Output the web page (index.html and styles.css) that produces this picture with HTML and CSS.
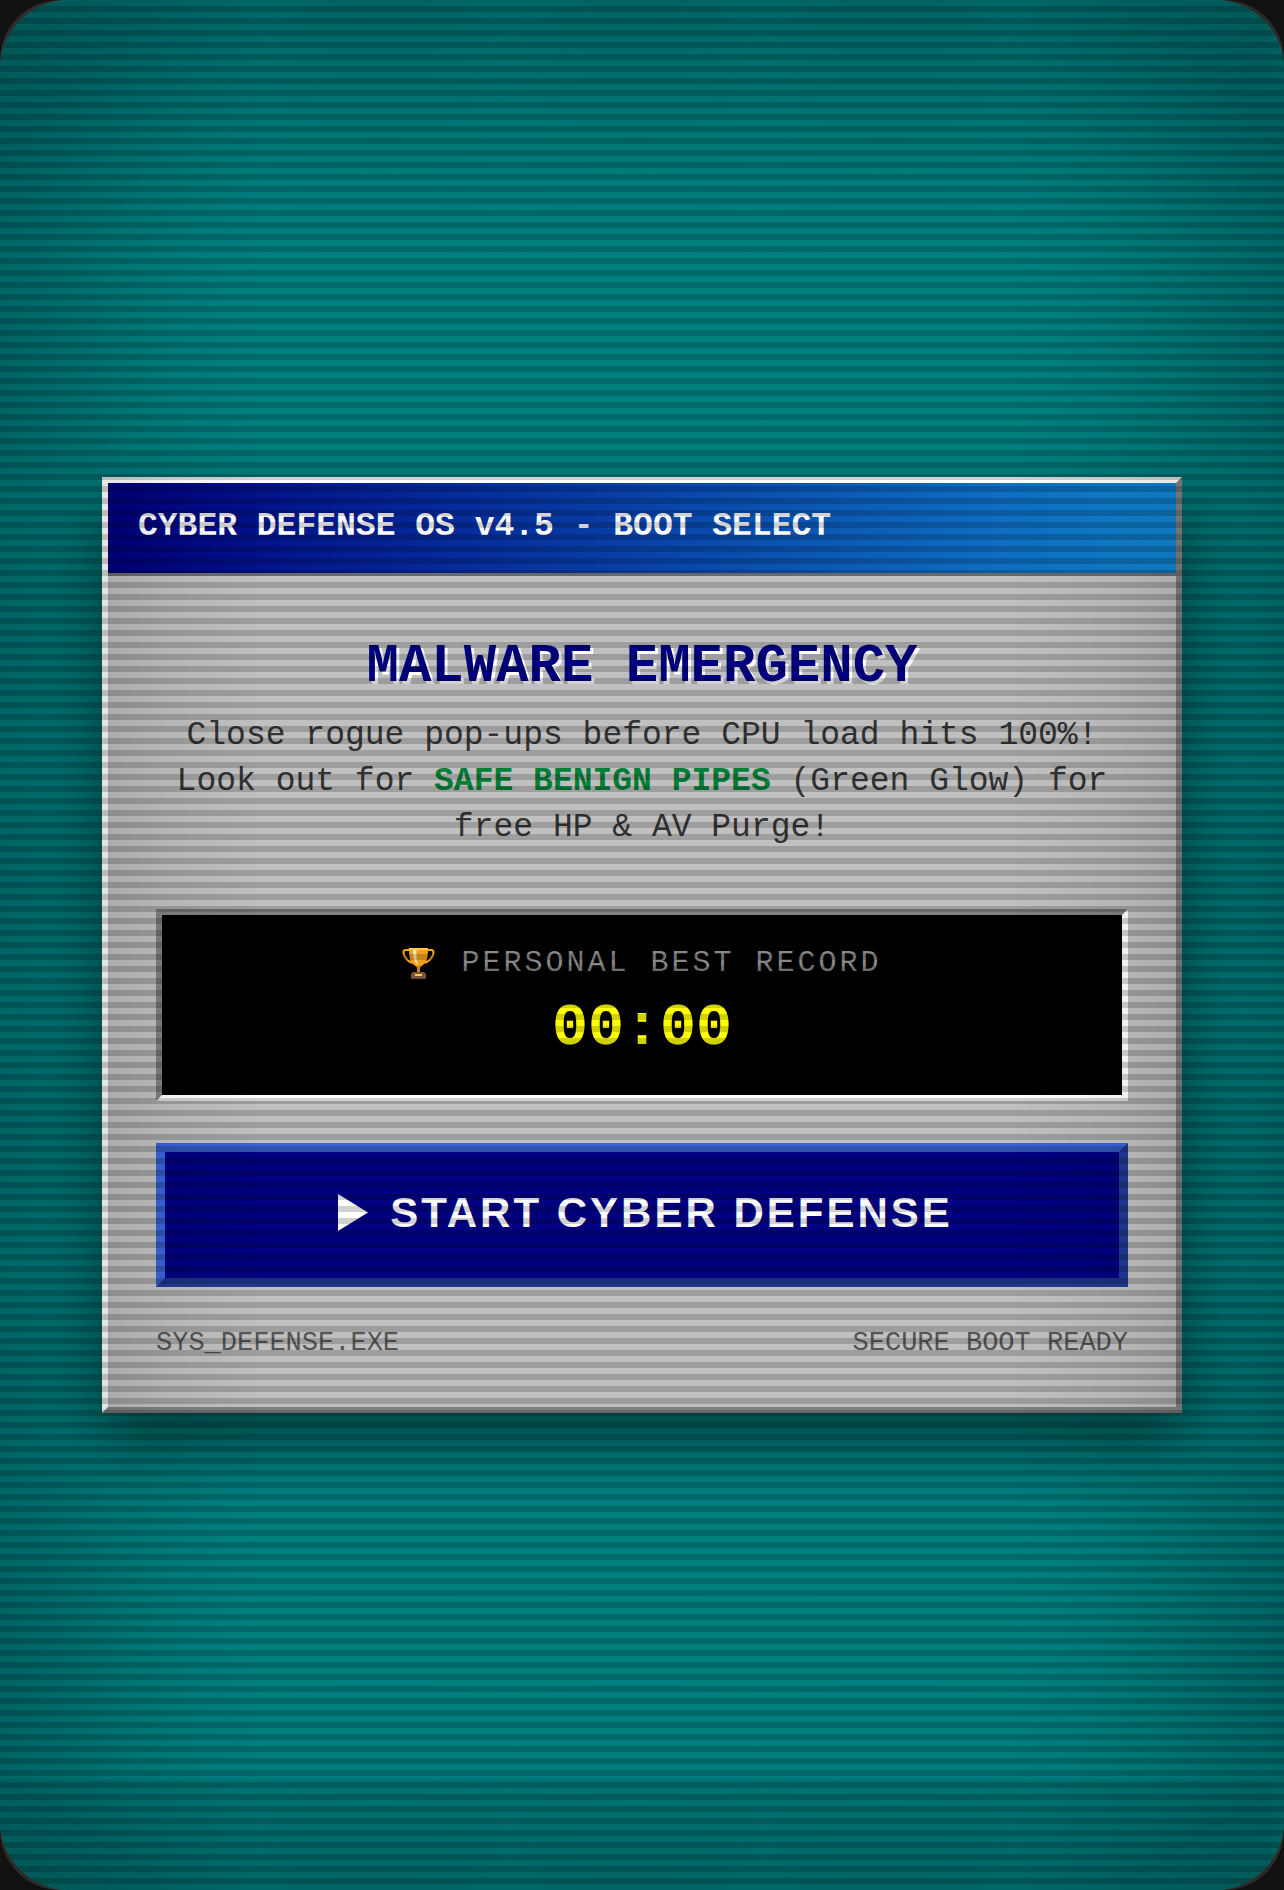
FILE: index.html
```html
<!DOCTYPE html>
<html lang="en">
<head>
    <meta charset="UTF-8">
    <title>Cyber Defense OS</title>
    <link rel="stylesheet" href="styles.css">
</head>
<body>
    <div class="screen">
        <div class="window">
            <header class="title-bar">CYBER DEFENSE OS v4.5 - BOOT SELECT</header>
            <section class="content">
                <h1>MALWARE EMERGENCY</h1>
                <p class="intro">Close rogue pop-ups before CPU load hits 100%!<br>Look out for <span class="safe">SAFE BENIGN PIPES</span> (Green Glow) for free HP &amp; AV Purge!</p>
                <div class="record">
                    <div class="record-label">
                        <svg class="trophy" viewBox="0 0 33 32">
                            <path d="M8 3H3.500C1 3 1 6 2.500 9c1.500 3 4 5.500 8 7M25 3h4.500C32 3 32 6 30.500 9c-1.500 3-4 5.500-8 7" fill="none" stroke="#f9a51a" stroke-width="2"/>
                            <path d="M7 2h19c0 8-1 13-5 16-2 1.500-3 2-3 3.500V25h-3v-3.500c0-1.500-1-2-3-3.500C8 15 7 10 7 2z" fill="#f4a01c"/>
                            <path d="M7 1h19v2H7z" fill="#ffcc4d"/>
                            <path d="M11 3h3.500c-.5 5 0 10 1.500 15-3.500-2-5-8-5-15z" fill="#fde6b5"/>
                            <path d="M11 25h11l2 2v5H9v-5z" fill="#7c533e"/>
                            <path d="M13 27h7v2h-7z" fill="#ffcc4d"/>
                        </svg>PERSONAL BEST RECORD
                    </div>
                    <div class="record-time">00:00</div>
                </div>
                <button class="start-btn">
                    <svg class="play" viewBox="0 0 30 37"><path d="M0 0L30 18.500 0 37z" fill="#fff"/></svg>START CYBER DEFENSE
                </button>
                <footer class="status">
                    <span>SYS_DEFENSE.EXE</span>
                    <span>SECURE BOOT READY</span>
                </footer>
            </section>
        </div>
    </div>
</body>
</html>
```

FILE: styles.css
```css
html {
    background-color: #111;
}
body {
    margin: 0;
    height: 1890px;
    background-color: #2b2b2b;
    border-radius: 60px;
}
.screen {
    position: relative;
    box-sizing: border-box;
    height: 1890px;
    overflow: hidden;
    display: flex;
    align-items: center;
    justify-content: center;
    background-color: #008080;
    border-radius: 69px;
    font-family: "Liberation Mono", monospace;
}
/* scanlines and vignette sit over everything */
.screen::after {
    content: "";
    position: absolute;
    inset: 0;
    pointer-events: none;
    border-radius: 69px;
    background: repeating-linear-gradient(to bottom, rgba(0,0,0,0) 0 6px, rgba(0,0,0,0.18) 6px 12px);
    box-shadow: inset 0 0 300px rgba(0,0,0,0.65);
}
.window {
    box-sizing: border-box;
    width: 1080px;
    background-color: #c0c0c0;
    border: 6px solid;
    border-color: #fff #808080 #808080 #fff;
    box-shadow: 0 30px 60px rgba(0,0,0,0.5);
}
.title-bar {
    padding: 21px 30px 23px;
    font-size: 33px;
    line-height: 46px;
    font-weight: bold;
    color: #fff;
    background: linear-gradient(to right, #000080, #1084d0);
    border-bottom: 3px solid #808080;
}
.content {
    padding: 60px 48px 48.4px;
    display: flex;
    flex-direction: column;
}
h1 {
    margin: 0;
    text-align: center;
    font-size: 54px;
    line-height: 62px;
    color: #000080;
    text-shadow: 3px 3px 0 #fff;
}
.intro {
    margin: 15px 0 57px;
    text-align: center;
    font-size: 33px;
    line-height: 46.2px;
    color: #333;
}
.safe {
    font-weight: bold;
    color: #008037;
}
.record {
    box-sizing: border-box;
    height: 192px;
    padding-top: 27px;
    text-align: center;
    background-color: #000;
    border: 6px solid;
    border-color: #808080 #fff #fff #808080;
}
.record-label {
    display: flex;
    align-items: center;
    justify-content: center;
    font-size: 30px;
    line-height: 42px;
    letter-spacing: 3px;
    color: #888;
}
.trophy {
    width: 33px;
    height: 32px;
    margin-right: 26px;
}
.record-time {
    margin-top: 10px;
    font-size: 60px;
    line-height: 68px;
    font-weight: bold;
    color: #ff0;
}
.start-btn {
    display: flex;
    align-items: center;
    justify-content: center;
    margin-top: 42px;
    height: 144px;
    padding: 0 0 4px 7px;
    font-family: "Liberation Sans", Arial, sans-serif;
    font-size: 42px;
    font-weight: bold;
    letter-spacing: 3px;
    color: #fff;
    background-color: #000080;
    border: 9px solid;
    border-color: #3a63d8 #1f3a93 #1f3a93 #3a63d8;
}
.play {
    width: 30px;
    height: 37px;
    margin-right: 22px;
}
.status {
    display: flex;
    justify-content: space-between;
    margin-top: 41px;
    font-size: 27px;
    line-height: 31px;
    color: #555;
}
```
